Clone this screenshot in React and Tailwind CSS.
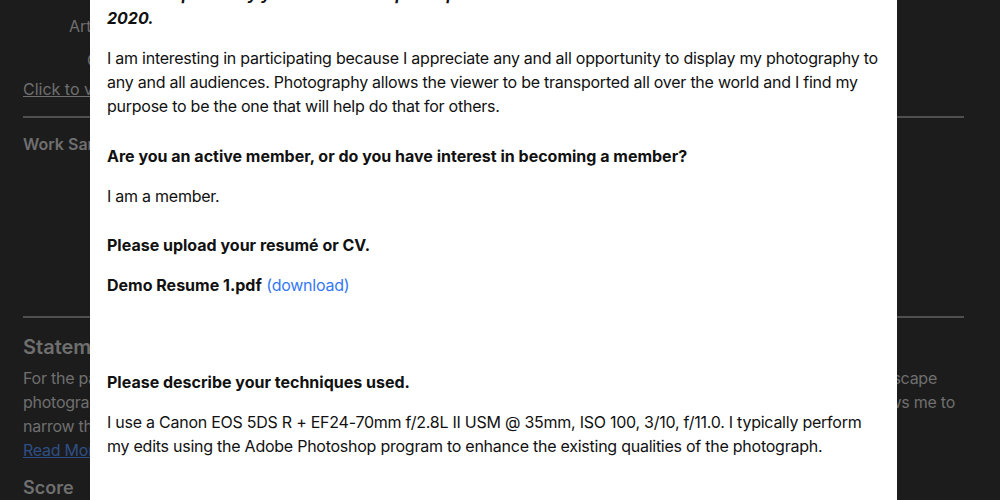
export default function App() {
  const font = { fontFamily: "Inter, 'Noto Sans', sans-serif" };

  return (
    <div
      className="relative w-[1000px] h-[500px] overflow-hidden bg-[#1c1c1c] text-[#6f6f6f]"
      style={font}
    >
      {/* page behind the dialog, dimmed */}
      <div className="pl-[23px] pr-[36px]">
        <div className="pl-[46px] pt-[14px] text-[16px] leading-[24px]">Artist: Jane Doe</div>
        <div className="pl-[64px] mt-[10px] text-[16px] leading-[24px]">Contact: jane@example.com</div>
        <div className="mt-[5px] text-[16px] leading-[24px] underline">Click to view submission</div>
        <div className="mt-[15px] h-[2px] bg-[#4f4f4f]" />
        <div className="mt-[14px] text-[16px] leading-[24px] font-semibold">Work Samples</div>
        <div className="mt-[160px] h-[2px] bg-[#4f4f4f]" />
        <div className="mt-[15px] text-[20px] leading-[28px] font-semibold">Statement</div>
        <div className="mt-[5px] text-[16px] leading-[24px] tracking-[-0.25px]">
          <div className="flex justify-between pr-[27px]">
            <span>For the past several years I have focused on</span>
            <span>landscape</span>
          </div>
          <div className="flex justify-between pr-[9px]">
            <span>photography of protected lands. It is a discipline that</span>
            <span>allows me to</span>
          </div>
          <div>narrow the frame down to what matters most.</div>
          <div className="text-[#2e4f86] underline">Read More</div>
        </div>
        <div className="mt-[12px] text-[18px] leading-[28px] font-semibold">Score</div>
      </div>

      {/* dialog */}
      <div className="absolute left-[90px] top-0 w-[807px] h-[500px] bg-white text-[#111111] overflow-hidden">
        <div className="-mt-[18px] px-[17px] text-[16px] leading-[24px]">
          <p className="font-bold italic">
            Please explain why you would like to participate in the Sanctuaries exhibition in
            <br />
            2020.
          </p>
          <p className="mt-4 tracking-[-0.25px]">
            I am interesting in participating because I appreciate any and all opportunity to display my photography to
            any and all audiences. Photography allows the viewer to be transported all over the world and I find my
            purpose to be the one that will help do that for others.
          </p>

          <p className="mt-[26px] font-bold">Are you an active member, or do you have interest in becoming a member?</p>
          <p className="mt-[16px] tracking-[-0.25px]">I am a member.</p>

          <p className="mt-[25px] font-bold">Please upload your resumé or CV.</p>
          <p className="mt-[16px]">
            <span className="font-bold">Demo Resume 1.pdf</span>{" "}
            <a className="text-[#3478f6] cursor-pointer tracking-[-0.25px]">(download)</a>
          </p>

          <div className="h-[49px]" />

          <p className="mt-[24px] font-bold">Please describe your techniques used.</p>
          <p className="mt-[16px] tracking-[-0.25px]">
            I use a Canon EOS 5DS R + EF24-70mm f/2.8L II USM @ 35mm, ISO 100, 3/10, f/11.0. I typically perform my
            edits using the Adobe Photoshop program to enhance the existing qualities of the photograph.
          </p>
        </div>
      </div>
    </div>
  );
}
